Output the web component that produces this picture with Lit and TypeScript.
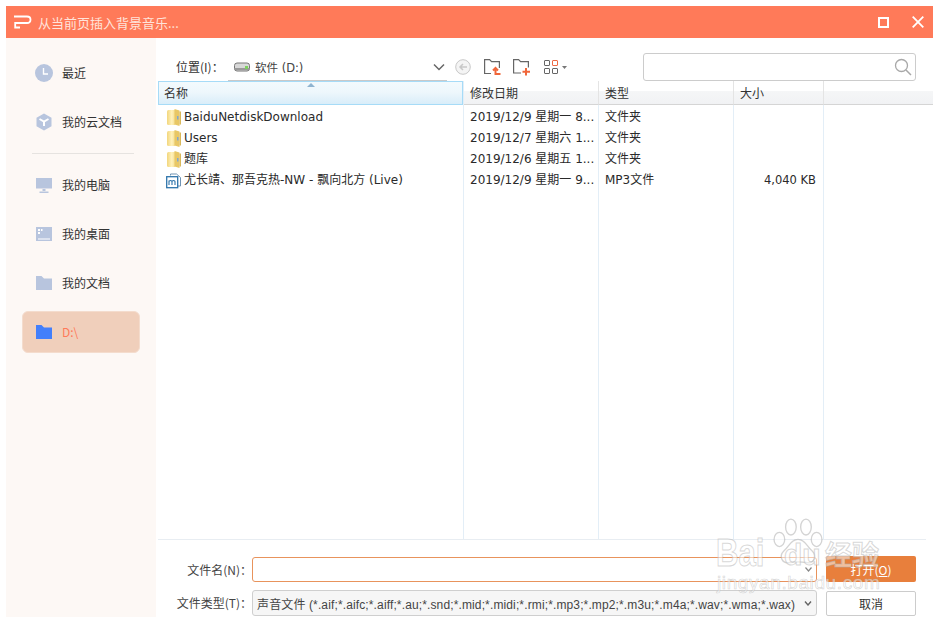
import { LitElement, html, css, svg } from "lit";
import { customElement } from "lit/decorators.js";

const folderY = svg`<svg width="15" height="17" viewBox="0 0 15 17"><defs><linearGradient id="fy" x1="0" y1="0" x2="1" y2="0"><stop offset="0" stop-color="#f2d67c"/><stop offset=".6" stop-color="#fff2bd"/><stop offset="1" stop-color="#f5dd8e"/></linearGradient></defs><path d="M0 2.500Q0 1 1.500 1H8v15H1.500Q0 16 0 14.500Z" fill="url(#fy)"/><path d="M7.500 0 12.500 1.500V17L7.500 15.500Z" fill="#e8c766"/><path d="M12.500 2.500H14V15.500H12.500Z" fill="#d9b85a"/><path d="M10 7h1.500v3.500H10z" fill="#7fa8d0"/></svg>`;

const sideIcons: Record<string, unknown> = {
  clock: svg`<svg width="18" height="18" viewBox="0 0 18 18"><circle cx="9" cy="9" r="9" fill="#b8c5de"/><path d="M8.500 4v6h4.500" fill="none" stroke="#fff" stroke-width="1.400"/></svg>`,
  cloud: svg`<svg width="16" height="18" viewBox="0 0 16 18"><path d="M8 .5 15.500 4.700v8.600L8 17.500.5 13.300V4.700Z" fill="#b8c5de"/><path d="M3.500 6 8 8.500 12.500 6M8 8.500V13" fill="none" stroke="#fff" stroke-width="2"/></svg>`,
  pc: svg`<svg width="16" height="15" viewBox="0 0 16 15"><path d="M0 0h16v10.500H0z" fill="#b8c5de"/><path d="M6.500 11h3v2h-3zM3.500 13.500h9V15h-9z" fill="#b8c5de"/></svg>`,
  desk: svg`<svg width="16" height="14" viewBox="0 0 16 14"><path d="M0 0h16v14H0z" fill="#b8c5de"/><path d="M2 2h2v2H2zM5 2h1.500v2H5zM2 5h2v2H2zM2 11.500h12v1H2z" fill="#fff"/></svg>`,
  doc: svg`<svg width="16" height="14" viewBox="0 0 16 14"><path d="M0 0h5.500L8 2.500h8V14H0z" fill="#b8c5de"/></svg>`,
  drive: svg`<svg width="16" height="14" viewBox="0 0 16 14"><path d="M0 0h5.500L8 2.500h8V14H0z" fill="#437ffb"/></svg>`,
};

const sideItems = [
  { icon: "clock", label: "最近" },
  { icon: "cloud", label: "我的云文档", rule: true },
  { icon: "pc", label: "我的电脑" },
  { icon: "desk", label: "我的桌面" },
  { icon: "doc", label: "我的文档" },
  { icon: "drive", label: "D:\\", active: true },
];

const columns = [
  { cls: "c-name", title: "名称", sel: true, cells: ["BaiduNetdiskDownload", "Users", "题库", "尤长靖、那吾克热-NW - 飘向北方 (Live)"] },
  { cls: "c-date", title: "修改日期", cells: ["2019/12/9 星期一 8...", "2019/12/7 星期六 1...", "2019/12/6 星期五 1...", "2019/12/9 星期一 9..."] },
  { cls: "c-type", title: "类型", cells: ["文件夹", "文件夹", "文件夹", "MP3文件"] },
  { cls: "c-size", title: "大小", cells: ["", "", "", "4,040 KB"] },
];

@customElement("app-root")
export class AppRoot extends LitElement {
  static styles = css`
    :host { display: block; width: 933px; height: 617px; background: #fff; overflow: hidden; position: relative;
      font-family: "Noto Sans CJK SC", "DejaVu Sans", sans-serif; font-size: 12px; color: #333; }
    .win { margin: 6px 0 0 6px; height: 611px; display: flex; flex-direction: column; }
    .title { height: 32px; background: #ff7a59; display: flex; align-items: center; color: #fff; padding-left: 8px; flex: none; }
    .title svg { display: block; }
    .title .t { margin-left: 6px; font-size: 13px; color: #ffe4db; }
    .title .sp { flex: 1; }
    .title .max { margin-right: 23px; }
    .title .close { margin-right: 9px; }
    .body { flex: 1; display: flex; min-height: 0; }
    .side { width: 150px; flex: none; background: #fdf8f5; padding: 14px 16px 0 16px; box-sizing: border-box; }
    .si { height: 42px; display: flex; align-items: center; margin-bottom: 7px; padding-left: 12px; border-radius: 6px; border: 1px solid transparent; box-sizing: border-box; width: 118px; }
    .si .ic { width: 18px; display: flex; justify-content: center; margin-right: 9px; }
    .si svg { display: block; }
    .si.active { background: #f0cfbb; border-color: #f4dccd; color: #ff7a59; }
    .si .lb { font-size: 12px; line-height: 16px; }
    .rule { height: 1px; background: #e6e3e0; margin: 10px 6px 10px 10px; }
    .main { flex: 1; min-width: 0; display: flex; flex-direction: column; }
    .tools { height: 43px; flex: none; display: flex; align-items: flex-end; padding-left: 20px; box-sizing: border-box; }
    .loc-l { width: 52px; height: 28px; line-height: 28px; font-size: 12px; color: #333; }
    .combo { width: 219px; height: 28px; border-bottom: 1px solid #c9c9c9; display: flex; align-items: center; padding-left: 6px; box-sizing: border-box; font-size: 12px; color: #444; }
    .combo .hd { margin-right: 5px; display: block; }
    .combo .tx { flex: 1; font-family: "DejaVu Sans", "Noto Sans CJK SC", sans-serif; font-size: 11.5px; }
    .combo .chev { margin-right: 2px; }
    .ticons { display: flex; align-items: center; height: 28px; margin-left: 8px; }
    .ticons svg { display: block; }
    .search { margin-left: auto; margin-right: 17px; width: 273px; height: 28px; border: 1px solid #ccc; border-radius: 3px; box-sizing: border-box; display: flex; justify-content: flex-end; align-items: center; padding-right: 3px; }
    .search svg { display: block; }
    .list { flex: 1; min-height: 0; display: flex; margin-left: 2px; margin-right: 7px; border-bottom: 1px solid #e8edf2; }
    .col { display: flex; flex-direction: column; border-right: 1px solid #e3eef7; box-sizing: border-box; flex: none; }
    .c-name { width: 306px; } .c-date { width: 135px; } .c-type { width: 135px; } .c-size { width: 90px; }
    .c-fill { flex: 1; border-right: none; margin-right: -7px; }
    .hd-cell { height: 24px; box-sizing: border-box; padding: 4px 0 0 6px; line-height: 15px; font-size: 12px; color: #333; background: linear-gradient(#fff 0, #fff 10px, #f5f6f7 10px, #f1f2f4 100%); border-bottom: 1px solid #d5d5d5; border-right: 1px solid #e4e4e4; margin-right: -1px; position: relative; }
    .col.sel .hd-cell { background: linear-gradient(#f3fafd 0, #eef7fc 10px, #d9edf9 100%); border: 1px solid #a6dbf7; padding: 3px 0 0 5px; margin-right: 0; }
    .hd-cell.plain { border-right: none; margin-right: 0; }
    .sort { position: absolute; left: 148px; top: 1px; display: block; }
    .cells { padding-top: 2px; color: #222; }
    .cell { height: 21px; line-height: 21px; padding-left: 6px; white-space: nowrap; font-size: 12px; color: #2a2a2a; overflow: hidden; }
    .c-name .cell { display: flex; align-items: center; padding-left: 9px; font-family: "DejaVu Sans", "Noto Sans CJK SC", sans-serif; }
    .c-name .cell svg { display: block; margin-right: 2px; flex: none; }
    .c-name .cell svg.mp { margin-left: -1px; }
    .c-date .cell, .c-type .cell { font-family: "DejaVu Sans", "Noto Sans CJK SC", sans-serif; }
    .c-size .cell { text-align: right; padding: 0 7px 0 0; font-size: 11.5px; font-family: "DejaVu Sans", "Noto Sans CJK SC", sans-serif; }
    .foot { height: 77px; flex: none; box-sizing: border-box; padding-top: 17px; display: grid; grid-template-columns: 96px 574px 90px; grid-template-rows: 25px 25px; row-gap: 9px; }
    .foot .lab { text-align: right; line-height: 25px; font-size: 12px; color: #444; }
    .lab.l2 { margin-top: -1px; }
    .inp { margin-right: 9px; border: 1px solid #e8935c; border-radius: 3px; box-sizing: border-box; background: #fff; display: flex; justify-content: flex-end; align-items: center; padding-right: 4px; }
    .sel-t { margin-right: 9px; margin-top: -1px; border: 1px solid #cfcfcf; border-radius: 3px; box-sizing: border-box; background: #f6f6f6; display: flex; align-items: center; padding: 0 4px; font-size: 12px; letter-spacing: .13px; color: #444; white-space: nowrap; overflow: hidden; font-family: "Liberation Sans", "Noto Sans CJK SC", sans-serif; }
    .sel-t .tx { flex: 1; overflow: hidden; }
    .btn { border-radius: 2px; box-sizing: border-box; display: flex; align-items: center; justify-content: center; font-size: 12px; }
    .btn.pri { background: #e87f3c; color: #fff; margin-top: -1px; }
    .btn.sec { background: #fff; border: 1px solid #ccc; color: #333; }
    .u { text-decoration: underline; }
    .mark { position: absolute; left: 712px; top: 514px; width: 221px; height: 103px; pointer-events: none; color: rgba(255,255,255,.5); -webkit-text-stroke: 1px rgba(175,175,175,.5); font-family: "Liberation Sans", "Noto Sans CJK SC", sans-serif; }
    .mark .b { position: absolute; left: 4px; top: 17px; font-size: 38px; font-weight: 700; line-height: 44px; white-space: nowrap; transform: scaleX(.82); transform-origin: 0 0; }
    .mark .d { position: absolute; left: 72px; top: 17px; font-size: 30px; font-weight: 700; line-height: 48px; white-space: nowrap; }
    .mark .j { position: absolute; left: 5px; top: 57px; font-size: 19px; line-height: 24px; letter-spacing: .6px; white-space: nowrap; -webkit-text-stroke: .6px rgba(175,175,175,.55); }
    .mark .k { position: absolute; left: 113px; top: 25px; font-size: 27px; font-weight: 700; line-height: 34px; white-space: nowrap; }
    .mark svg { position: absolute; left: 55px; top: 0; display: block; }
  `;

  render() {
    return html`
      <div class="win">
        <div class="title">
          <svg width="18" height="14" viewBox="0 0 18 14"><path d="M0 1.500h13q3.500 0 3.500 3.200T13 8H1.200v4.500H6" fill="none" stroke="#fff" stroke-width="1.800"/></svg>
          <span class="t">从当前页插入背景音乐...</span>
          <span class="sp"></span>
          <svg class="max" width="11" height="11" viewBox="0 0 11 11"><rect x="1" y="1" width="9" height="9" fill="none" stroke="#fff" stroke-width="2"/></svg>
          <svg class="close" width="12" height="12" viewBox="0 0 12 12"><path d="M.7.700 11.300 11.300M11.300.7.700 11.300" stroke="#fff" stroke-width="1.800"/></svg>
        </div>
        <div class="body">
          <div class="side">
            ${sideItems.map((s) => html`
              <div class="si ${s.active ? "active" : ""}">
                <span class="ic">${sideIcons[s.icon]}</span><span class="lb">${s.label}</span>
              </div>
              ${s.rule ? html`<div class="rule"></div>` : ""}
            `)}
          </div>
          <div class="main">
            <div class="tools">
              <div class="loc-l">位置(I)：</div>
              <div class="combo">
                <svg class="hd" width="16" height="10" viewBox="0 0 16 10"><rect x=".5" y="1" width="15" height="8" rx="2.500" fill="#d8d8d8" stroke="#777"/><path d="M1 6h14v2H1z" fill="#999"/><rect x="11" y="4" width="3" height="3" fill="#7ccf5e"/></svg>
                <span class="tx">软件 (D:)</span>
                <svg class="chev" width="12" height="8" viewBox="0 0 12 8"><path d="M1 1.500 6 6.500l5-5" fill="none" stroke="#666" stroke-width="1.500"/></svg>
              </div>
              <div class="ticons">
                <svg width="16" height="16" viewBox="0 0 16 16" style="margin-right:13px"><circle cx="8" cy="8" r="7.300" fill="#f4f4f4" stroke="#c8c8c8"/><path d="M12 8H5M8 5 5 8l3 3" fill="none" stroke="#c8c8c8" stroke-width="1.500"/></svg>
                <svg width="18" height="17" viewBox="0 0 18 17" style="margin-right:11px"><path d="M7 14.500H.6V.6h5l2 2h7.800v6.500" fill="none" stroke="#666" stroke-width="1.200"/><path d="M11.500 9.500v5.500h5M9 11.500l2.500-2.500 2.500 2.500" fill="none" stroke="#f0663a" stroke-width="2"/></svg>
                <svg width="18" height="17" viewBox="0 0 18 17" style="margin-right:13px"><path d="M8 14H.6V.6h5l2 2h7.800v6" fill="none" stroke="#666" stroke-width="1.200"/><path d="M13 9v7.500M9.500 12.700h7.500" fill="none" stroke="#f0663a" stroke-width="2"/></svg>
                <svg width="14" height="14" viewBox="0 0 14 14"><rect x=".5" y=".5" width="5" height="5" rx=".5" fill="none" stroke="#666"/><rect x="8.500" y=".5" width="5" height="5" rx=".5" fill="none" stroke="#ef6b45"/><rect x=".5" y="8.500" width="5" height="5" rx=".5" fill="none" stroke="#666"/><rect x="8.500" y="8.500" width="5" height="5" rx=".5" fill="none" stroke="#666"/></svg>
                <svg width="5" height="3" viewBox="0 0 5 3" style="margin-left:4px"><path d="M0 0h5L2.500 3z" fill="#777"/></svg>
              </div>
              <div class="search">
                <svg width="18" height="18" viewBox="0 0 18 18"><circle cx="7.500" cy="7.500" r="6" fill="none" stroke="#a8a8a8" stroke-width="1.300"/><path d="M12 12l5 5" stroke="#a8a8a8" stroke-width="1.500"/></svg>
              </div>
            </div>
            <div class="list">
              ${columns.map((c) => html`
                <div class="col ${c.cls} ${c.sel ? "sel" : ""}">
                  <div class="hd-cell">${c.sel ? html`<svg class="sort" width="8" height="4" viewBox="0 0 8 4"><path d="M0 4 4 0l4 4z" fill="#8fb4d0"/></svg>` : ""}${c.title}</div>
                  <div class="cells">
                    ${c.cells.map((t, i) => html`<div class="cell">
                      ${c.sel
                        ? i < 3
                          ? folderY
                          : svg`<svg class="mp" width="16" height="16" viewBox="0 0 16 16"><path d="M4.500 2.500V1h6l4 3.500V13H12" fill="#fff" stroke="#6f93b3"/><rect x=".7" y="3.700" width="11" height="11" fill="#fff" stroke="#2e74ab" stroke-width="1.300"/><path d="M3 12V7.500M3 8.500Q3 7.500 4.500 7.500T6 8.500V12M6 8.500Q6 7.500 7.500 7.500T9 8.500V12" fill="none" stroke="#2e74ab" stroke-width="1.100"/></svg>`
                        : ""}<span>${t}</span>
                    </div>`)}
                  </div>
                </div>
              `)}
              <div class="col c-fill"><div class="hd-cell plain"></div></div>
            </div>
            <div class="foot">
              <div class="lab">文件名(N)：</div>
              <div class="inp"><svg width="7" height="5" viewBox="0 0 7 5"><path d="M.5.500 3.500 4l3-3.500" fill="none" stroke="#888" stroke-width="1.200"/></svg></div>
              <div class="btn pri">打开(<span class="u">O</span>)</div>
              <div class="lab l2">文件类型(T)：</div>
              <div class="sel-t"><span class="tx">声音文件 (*.aif;*.aifc;*.aiff;*.au;*.snd;*.mid;*.midi;*.rmi;*.mp3;*.mp2;*.m3u;*.m4a;*.wav;*.wma;*.wax)</span><svg width="8" height="5" viewBox="0 0 8 5"><path d="M1 .5 4 4l3-3.500" fill="none" stroke="#666" stroke-width="1.400"/></svg></div>
              <div class="btn sec">取消</div>
            </div>
          </div>
        </div>
      </div>
      <div class="mark" aria-hidden="true">
        <svg width="62" height="58" viewBox="0 0 70 60" fill="rgba(255,255,255,.5)" stroke="rgba(175,175,175,.55)" stroke-width="1.500"><ellipse cx="14" cy="26" rx="6" ry="8"/><ellipse cx="27" cy="12" rx="6" ry="9"/><ellipse cx="44" cy="12" rx="6" ry="9"/><ellipse cx="56" cy="26" rx="6" ry="8"/><path d="M35 26c-8 0-10 8-16 13-6 6-2 15 7 13 6-1 12-1 18 0 9 2 13-7 7-13-6-5-8-13-16-13z"/></svg>
        <span class="b">Bai</span>
        <span class="d">du</span>
        <span class="k">经验</span>
        <span class="j">jingyan.baidu.com</span>
      </div>
    `;
  }
}
